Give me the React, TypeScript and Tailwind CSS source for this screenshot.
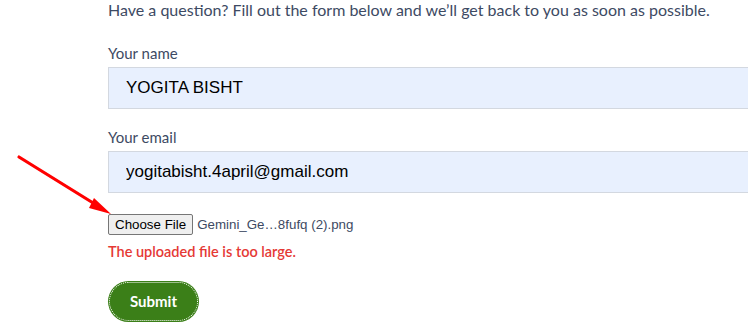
import { useState } from "react";

export default function App() {
  const [name, setName] = useState("YOGITA BISHT");
  const [email, setEmail] = useState("yogitabisht.4april@gmail.com");

  return (
    <div className="relative w-[748px] h-[322px] overflow-hidden bg-white">
      {/* red pointer arrow */}
      <svg className="absolute left-0 top-0" width="130" height="230" viewBox="0 0 130 230">
        <line x1="19" y1="157" x2="98" y2="206" stroke="#ff0000" strokeWidth="3.2" strokeLinecap="round" />
        <polygon points="111,214 94,198 89,208" fill="#ff0000" />
      </svg>

      <form className="pl-[108px] w-[900px]" style={{ fontFamily: "Lato, 'Noto Sans', sans-serif" }}>
        <p className="text-[16px] leading-[22px] text-[#3d4a63] -mt-[1px]">
          Have a question? Fill out the form below and we’ll get back to you as soon as possible.
        </p>

        <label className="block mt-[21px] text-[15px] leading-[22px] text-[#3d4a63]">Your name</label>
        <input
          className="mt-[3px] block w-full h-[42px] px-[17px] bg-[#e8f0fe] border border-[#d3d8e0] text-[17px] text-black outline-none"
          style={{ fontFamily: "'Liberation Sans', Arial, sans-serif" }}
          value={name}
          onChange={(e) => setName(e.target.value)}
        />

        <label className="block mt-[17px] text-[15px] leading-[22px] text-[#3d4a63]">Your email</label>
        <input
          className="mt-[3px] block w-full h-[42px] px-[17px] bg-[#e8f0fe] border border-[#d3d8e0] text-[17px] text-black outline-none"
          style={{ fontFamily: "'Liberation Sans', Arial, sans-serif" }}
          value={email}
          onChange={(e) => setEmail(e.target.value)}
        />

        <div className="mt-[21px] flex items-center gap-[4px] text-[13.33px] leading-none" style={{ fontFamily: "'Liberation Sans', Arial, sans-serif" }}>
          <button type="button" className="h-[21px] px-[6px] bg-[#efefef] border border-[#767676] rounded-[2px] text-black">
            Choose File
          </button>
          <span className="text-[#3d4a63]">Gemini_Ge…8fufq (2).png</span>
        </div>

        <p className="mt-[7px] text-[14.5px] leading-[20px] font-semibold text-[#e53935]">The uploaded file is too large.</p>

        <button
          type="button"
          className="mt-[19px] w-[91px] h-[41px] rounded-full bg-[#3b7f18] text-white text-[15px] font-bold outline-1 outline-dotted outline-white -outline-offset-2"
        >
          Submit
        </button>
      </form>
    </div>
  );
}
